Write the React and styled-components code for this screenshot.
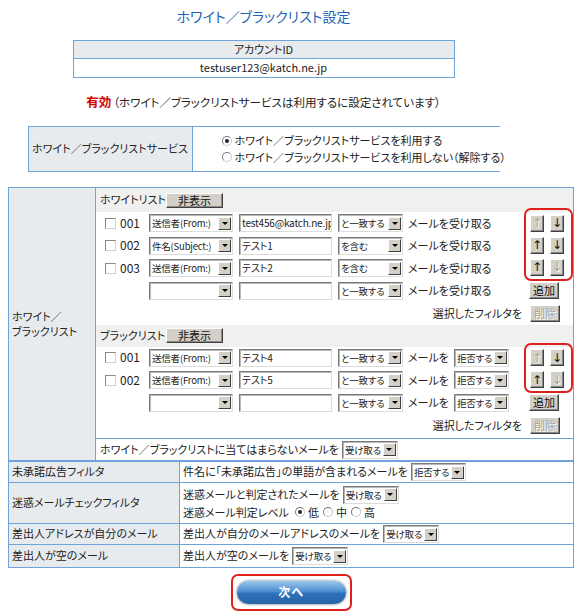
import React from 'react';
import styled, { createGlobalStyle } from 'styled-components';

const C = {
  border: '#6ea4da',
  gray: '#e8ebee',
  band: '#f0f0f0',
  text: '#222',
  title: '#1f63b6',
  red: '#d40000',
  face: '#d4d0c8',
  mark: '#e0201c',
};

const GlobalStyle = createGlobalStyle`
  html, body { margin: 0; padding: 0; background: #fff; }
  body {
    padding: 0 8px;
    font-family: "Noto Sans CJK JP", "Noto Sans", sans-serif;
    font-size: 11px;
    line-height: 1.4;
    color: ${C.text};
    font-feature-settings: "palt" 1;
  }
  * { box-sizing: border-box; }
`;

const Page = styled.div`
  width: 566px;
`;

const TopSection = styled.section`
  width: 511px;
  display: flex;
  flex-direction: column;
  align-items: center;
`;

const Title = styled.h1`
  margin: 6px 0 0;
  height: 20px;
  line-height: 20px;
  font-size: 14px;
  font-weight: 400;
  color: ${C.title};
`;

const InfoTable = styled.div`
  margin-top: 14px;
  width: 382px;
  display: grid;
  grid-template-rows: 17px 18px;
  gap: 1px;
  background: ${C.border};
  border: 1px solid ${C.border};
`;

const InfoCell = styled.div`
  display: flex;
  align-items: center;
  justify-content: center;
  background: ${p => (p.$head ? C.gray : '#fff')};
`;

const Status = styled.p`
  margin: 14px 0 0;
  height: 20px;
  line-height: 20px;
  font-size: 11.5px;
`;

const Enabled = styled.strong`
  color: ${C.red};
  font-weight: 700;
  font-size: 12.5px;
  margin-right: 2px;
`;

const ServiceTable = styled.div`
  margin-top: 14px;
  width: 472px;
  height: 46px;
  display: grid;
  grid-template-columns: 163px 1fr;
  gap: 1px;
  background: ${C.border};
  border: 1px solid ${C.border};
`;

const ServiceLabel = styled.div`
  background: ${C.gray};
  display: flex;
  align-items: center;
  justify-content: center;
  white-space: nowrap;
`;

const ServiceOptions = styled.div`
  background: #fff;
  display: flex;
  flex-direction: column;
  justify-content: center;
  gap: 1px;
  padding-left: 29px;
  white-space: nowrap;
`;

const RadioLine = styled.label`
  display: inline-flex;
  align-items: center;
  margin-right: ${p => p.$gap || 0}px;
`;

const RadioMark = styled.span`
  width: 10px;
  height: 10px;
  flex: none;
  border-radius: 50%;
  border: 1px solid;
  border-color: #7c7c7c #c8c8c8 #c8c8c8 #7c7c7c;
  background: #fff;
  margin-right: 3px;
  display: flex;
  align-items: center;
  justify-content: center;
  &::after {
    content: '';
    width: 4px;
    height: 4px;
    border-radius: 50%;
    background: ${p => (p.$on ? '#222' : 'transparent')};
  }
`;

const MainTable = styled.div`
  margin-top: 15px;
  width: 566px;
  display: grid;
  grid-template-columns: 86px 1fr;
  gap: 1px;
  background: ${C.border};
  border: 1px solid ${C.border};
`;

const SideLabel = styled.div`
  background: ${C.gray};
  display: flex;
  align-items: center;
  padding-left: 3px;
  line-height: 15px;
  white-space: nowrap;
`;

const ListColumn = styled.div`
  background: #fff;
  display: flex;
  flex-direction: column;
`;

const ListHeader = styled.div`
  height: ${p => p.$h}px;
  background: ${C.band};
  display: flex;
  align-items: center;
  padding-left: 4px;
`;

const ListName = styled.span`
  width: 66px;
  white-space: nowrap;
`;

const FaceButton = styled.button`
  font: inherit;
  font-size: 11px;
  line-height: 1;
  color: ${p => (p.disabled ? '#a4a4a4' : '#111')};
  text-shadow: ${p => (p.disabled ? '1px 1px 0 #fff' : 'none')};
  background: ${C.face};
  border: 1px solid;
  border-color: #fff #404040 #404040 #fff;
  box-shadow: inset -1px -1px 0 #8a8a8a;
  padding: 0;
  width: ${p => p.$w}px;
  height: ${p => p.$h}px;
  display: inline-flex;
  align-items: center;
  justify-content: center;
  margin-left: ${p => p.$ml || 0}px;
  cursor: default;
`;

const ListBody = styled.div`
  display: grid;
  grid-template-columns: 1fr 49px;
  grid-auto-rows: 22.5px;
  background: #fff;
  padding-bottom: ${p => p.$pb || 0}px;
`;

const FilterRowEl = styled.div`
  grid-column: 1;
  grid-row: ${p => p.$row};
  display: flex;
  align-items: center;
  padding-left: 9px;
`;

const Lead = styled.span`
  width: 44px;
  flex: none;
  display: flex;
  align-items: center;
  font-size: 12px;
`;

const CheckBox = styled.span`
  width: 11px;
  height: 11px;
  flex: none;
  border: 1px solid;
  border-color: #888 #d0d0d0 #d0d0d0 #888;
  background: #fff;
  margin-right: 4px;
`;

const SelectFrame = styled.span`
  display: inline-flex;
  align-items: center;
  flex: none;
  width: ${p => p.$w}px;
  height: 18px;
  border: 1px solid;
  border-color: #7a7a7a #dcdcdc #dcdcdc #7a7a7a;
  box-shadow: inset 1px 1px 0 #b8b8b8;
  background: #fff;
  padding: 0 1px 0 2px;
  margin-left: ${p => p.$ml || 0}px;
  font-size: 9.5px;
  letter-spacing: -0.2px;
`;

const SelectText = styled.span`
  flex: 1;
  min-width: 0;
  line-height: 14px;
  white-space: nowrap;
`;

const DropArrow = styled.span`
  width: 13px;
  height: 13px;
  flex: none;
  background: ${C.face};
  border: 1px solid;
  border-color: #fff #404040 #404040 #fff;
  display: flex;
  align-items: center;
  justify-content: center;
  &::after {
    content: '';
    border-left: 3px solid transparent;
    border-right: 3px solid transparent;
    border-top: 3px solid #000;
  }
`;

const TextField = styled.span`
  display: inline-flex;
  align-items: center;
  flex: none;
  width: ${p => p.$w}px;
  height: 18px;
  border: 1px solid;
  border-color: #7a7a7a #dcdcdc #dcdcdc #7a7a7a;
  box-shadow: inset 1px 1px 0 #b8b8b8;
  background: #fff;
  padding-left: 2px;
  margin-left: ${p => p.$ml || 0}px;
  white-space: nowrap;
  overflow: hidden;
  font-size: 10px;
  line-height: 14px;
  letter-spacing: -0.2px;
`;

const Phrase = styled.span`
  margin-left: ${p => p.$ml || 0}px;
  white-space: nowrap;
`;

const ArrowGroup = styled.div`
  grid-column: 2;
  grid-row: 1 / span ${p => p.$span};
  margin: -4px 0 -1px;
  border: 2px solid ${C.mark};
  border-radius: 7px;
  display: grid;
  grid-template-columns: 14px 14px;
  grid-auto-rows: 1fr;
  column-gap: 6px;
  align-items: center;
  padding: 2px 0 0 4px;
`;

const ArrowButton = styled(FaceButton)`
  width: 14px;
  height: 17px;
  font-size: 12px;
  font-family: "DejaVu Sans", sans-serif;
`;

const ControlCell = styled.div`
  grid-column: ${p => p.$col};
  grid-row: ${p => p.$row};
  display: flex;
  align-items: center;
  justify-content: ${p => (p.$col === 1 ? 'flex-end' : 'flex-start')};
  padding-right: ${p => (p.$col === 1 ? 2 : 0)}px;
  white-space: nowrap;
`;

const Footer = styled.div`
  border-top: 1px solid ${C.border};
  height: 22px;
  display: flex;
  align-items: center;
  padding-left: 4px;
  white-space: nowrap;
`;

const OptionTable = styled.div`
  width: 566px;
  display: grid;
  grid-template-columns: 170px 1fr;
  grid-template-rows: 20px 40px 20px 22px;
  gap: 1px;
  background: ${C.border};
  border: 1px solid ${C.border};
`;

const OptLabel = styled.div`
  background: ${C.gray};
  display: flex;
  align-items: center;
  padding-left: 3px;
  white-space: nowrap;
`;

const OptValue = styled.div`
  background: #fff;
  display: flex;
  flex-direction: column;
  justify-content: center;
  gap: 1px;
  padding-left: 3px;
`;

const Line = styled.div`
  display: flex;
  align-items: center;
  white-space: nowrap;
`;

const Actions = styled.div`
  display: flex;
  justify-content: center;
  margin-top: 6px;
`;

const Highlight = styled.div`
  border: 2px solid ${C.mark};
  border-radius: 7px;
  padding: 4px 3px 4px 3px;
`;

const NextButton = styled.button`
  width: 111px;
  height: 25px;
  border-radius: 13px;
  border: 1px solid #c4ccd6;
  box-shadow: 0 0 0 1px #e6e9ec;
  background: linear-gradient(#9cc6ec 0%, #4d8fd0 45%, #2d6fb8 55%, #2a64a8 100%);
  color: #fff;
  font: inherit;
  font-size: 12px;
  font-weight: 700;
  letter-spacing: 1px;
  display: flex;
  align-items: center;
  justify-content: center;
  cursor: pointer;
`;

function Select({ w, value, ml }) {
  return (
    <SelectFrame $w={w} $ml={ml}>
      <SelectText>{value}</SelectText>
      <DropArrow />
    </SelectFrame>
  );
}

function Radio({ on, children, gap }) {
  return (
    <RadioLine $gap={gap}>
      <RadioMark $on={on} />
      {children}
    </RadioLine>
  );
}

function FilterRow({ row, no, field, value, match, black }) {
  return (
    <FilterRowEl $row={row}>
      <Lead>
        {no && (
          <>
            <CheckBox />
            {no}
          </>
        )}
      </Lead>
      <Select w={84} value={field} />
      <TextField $w={93} $ml={6}>{value}</TextField>
      <Select w={65} ml={6} value={match} />
      {black ? (
        <>
          <Phrase $ml={5}>メールを</Phrase>
          <Select w={55} ml={5} value="拒否する" />
        </>
      ) : (
        <Phrase $ml={5}>メールを受け取る</Phrase>
      )}
    </FilterRowEl>
  );
}

const whiteRows = [
  { no: '001', field: '送信者(From:)', value: 'test456@katch.ne.jp', match: 'と一致する' },
  { no: '002', field: '件名(Subject:)', value: 'テスト1', match: 'を含む' },
  { no: '003', field: '送信者(From:)', value: 'テスト2', match: 'を含む' },
  { no: '', field: '', value: '', match: 'と一致する' },
];

const blackRows = [
  { no: '001', field: '送信者(From:)', value: 'テスト4', match: 'と一致する' },
  { no: '002', field: '送信者(From:)', value: 'テスト5', match: 'と一致する' },
  { no: '', field: '', value: '', match: 'と一致する' },
];

const whiteArrows = [
  [true, false],
  [false, false],
  [false, true],
];
const blackArrows = [
  [true, false],
  [false, true],
];

function FilterList({ name, rows, arrows, black, headerH, pb }) {
  const n = rows.length;
  return (
    <>
      <ListHeader $h={headerH}>
        <ListName>{name}</ListName>
        <FaceButton $w={57} $h={15}>非表示</FaceButton>
      </ListHeader>
      <ListBody $pb={pb}>
        {rows.map((r, i) => (
          <FilterRow key={i} row={i + 1} black={black} {...r} />
        ))}
        <ArrowGroup $span={arrows.length}>
          {arrows.map(([upOff, downOff], i) => (
            <React.Fragment key={i}>
              <ArrowButton disabled={upOff}>↑</ArrowButton>
              <ArrowButton disabled={downOff}>↓</ArrowButton>
            </React.Fragment>
          ))}
        </ArrowGroup>
        <ControlCell $col={2} $row={n}>
          <FaceButton $w={30} $h={17} $ml={5}>追加</FaceButton>
        </ControlCell>
        <ControlCell $col={1} $row={n + 1}>選択したフィルタを</ControlCell>
        <ControlCell $col={2} $row={n + 1}>
          <FaceButton $w={30} $h={17} $ml={6} disabled>削除</FaceButton>
        </ControlCell>
      </ListBody>
    </>
  );
}

export default function App() {
  return (
    <Page>
      <GlobalStyle />
      <TopSection>
        <Title>ホワイト／ブラックリスト設定</Title>
        <InfoTable>
          <InfoCell $head>アカウントID</InfoCell>
          <InfoCell>testuser123@katch.ne.jp</InfoCell>
        </InfoTable>
        <Status>
          <Enabled>有効</Enabled>（ホワイト／ブラックリストサービスは利用するに設定されています）
        </Status>
        <ServiceTable>
          <ServiceLabel>ホワイト／ブラックリストサービス</ServiceLabel>
          <ServiceOptions>
            <Radio on>ホワイト／ブラックリストサービスを利用する</Radio>
            <Radio>ホワイト／ブラックリストサービスを利用しない（解除する）</Radio>
          </ServiceOptions>
        </ServiceTable>
      </TopSection>

      <MainTable>
        <SideLabel>
          ホワイト／
          <br />
          ブラックリスト
        </SideLabel>
        <ListColumn>
          <FilterList name="ホワイトリスト" rows={whiteRows} arrows={whiteArrows} headerH={24} />
          <FilterList name="ブラックリスト" rows={blackRows} arrows={blackArrows} black headerH={22} pb={1.5} />
          <Footer>
            ホワイト／ブラックリストに当てはまらないメールを
            <Select w={56} ml={3} value="受け取る" />
          </Footer>
        </ListColumn>
      </MainTable>

      <OptionTable>
        <OptLabel>未承諾広告フィルタ</OptLabel>
        <OptValue>
          <Line>
            件名に「未承諾広告」の単語が含まれるメールを
            <Select w={55} ml={3} value="拒否する" />
          </Line>
        </OptValue>
        <OptLabel>迷惑メールチェックフィルタ</OptLabel>
        <OptValue>
          <Line>
            迷惑メールと判定されたメールを
            <Select w={56} ml={3} value="受け取る" />
          </Line>
          <Line>
            <Phrase>迷惑メール判定レベル</Phrase>
            <Phrase $ml={6} />
            <Radio on gap={4}>低</Radio>
            <Radio gap={4}>中</Radio>
            <Radio>高</Radio>
          </Line>
        </OptValue>
        <OptLabel>差出人アドレスが自分のメール</OptLabel>
        <OptValue>
          <Line>
            差出人が自分のメールアドレスのメールを
            <Select w={56} ml={3} value="受け取る" />
          </Line>
        </OptValue>
        <OptLabel>差出人が空のメール</OptLabel>
        <OptValue>
          <Line>
            差出人が空のメールを
            <Select w={56} ml={3} value="受け取る" />
          </Line>
        </OptValue>
      </OptionTable>

      <Actions>
        <Highlight>
          <NextButton>次へ</NextButton>
        </Highlight>
      </Actions>
    </Page>
  );
}
